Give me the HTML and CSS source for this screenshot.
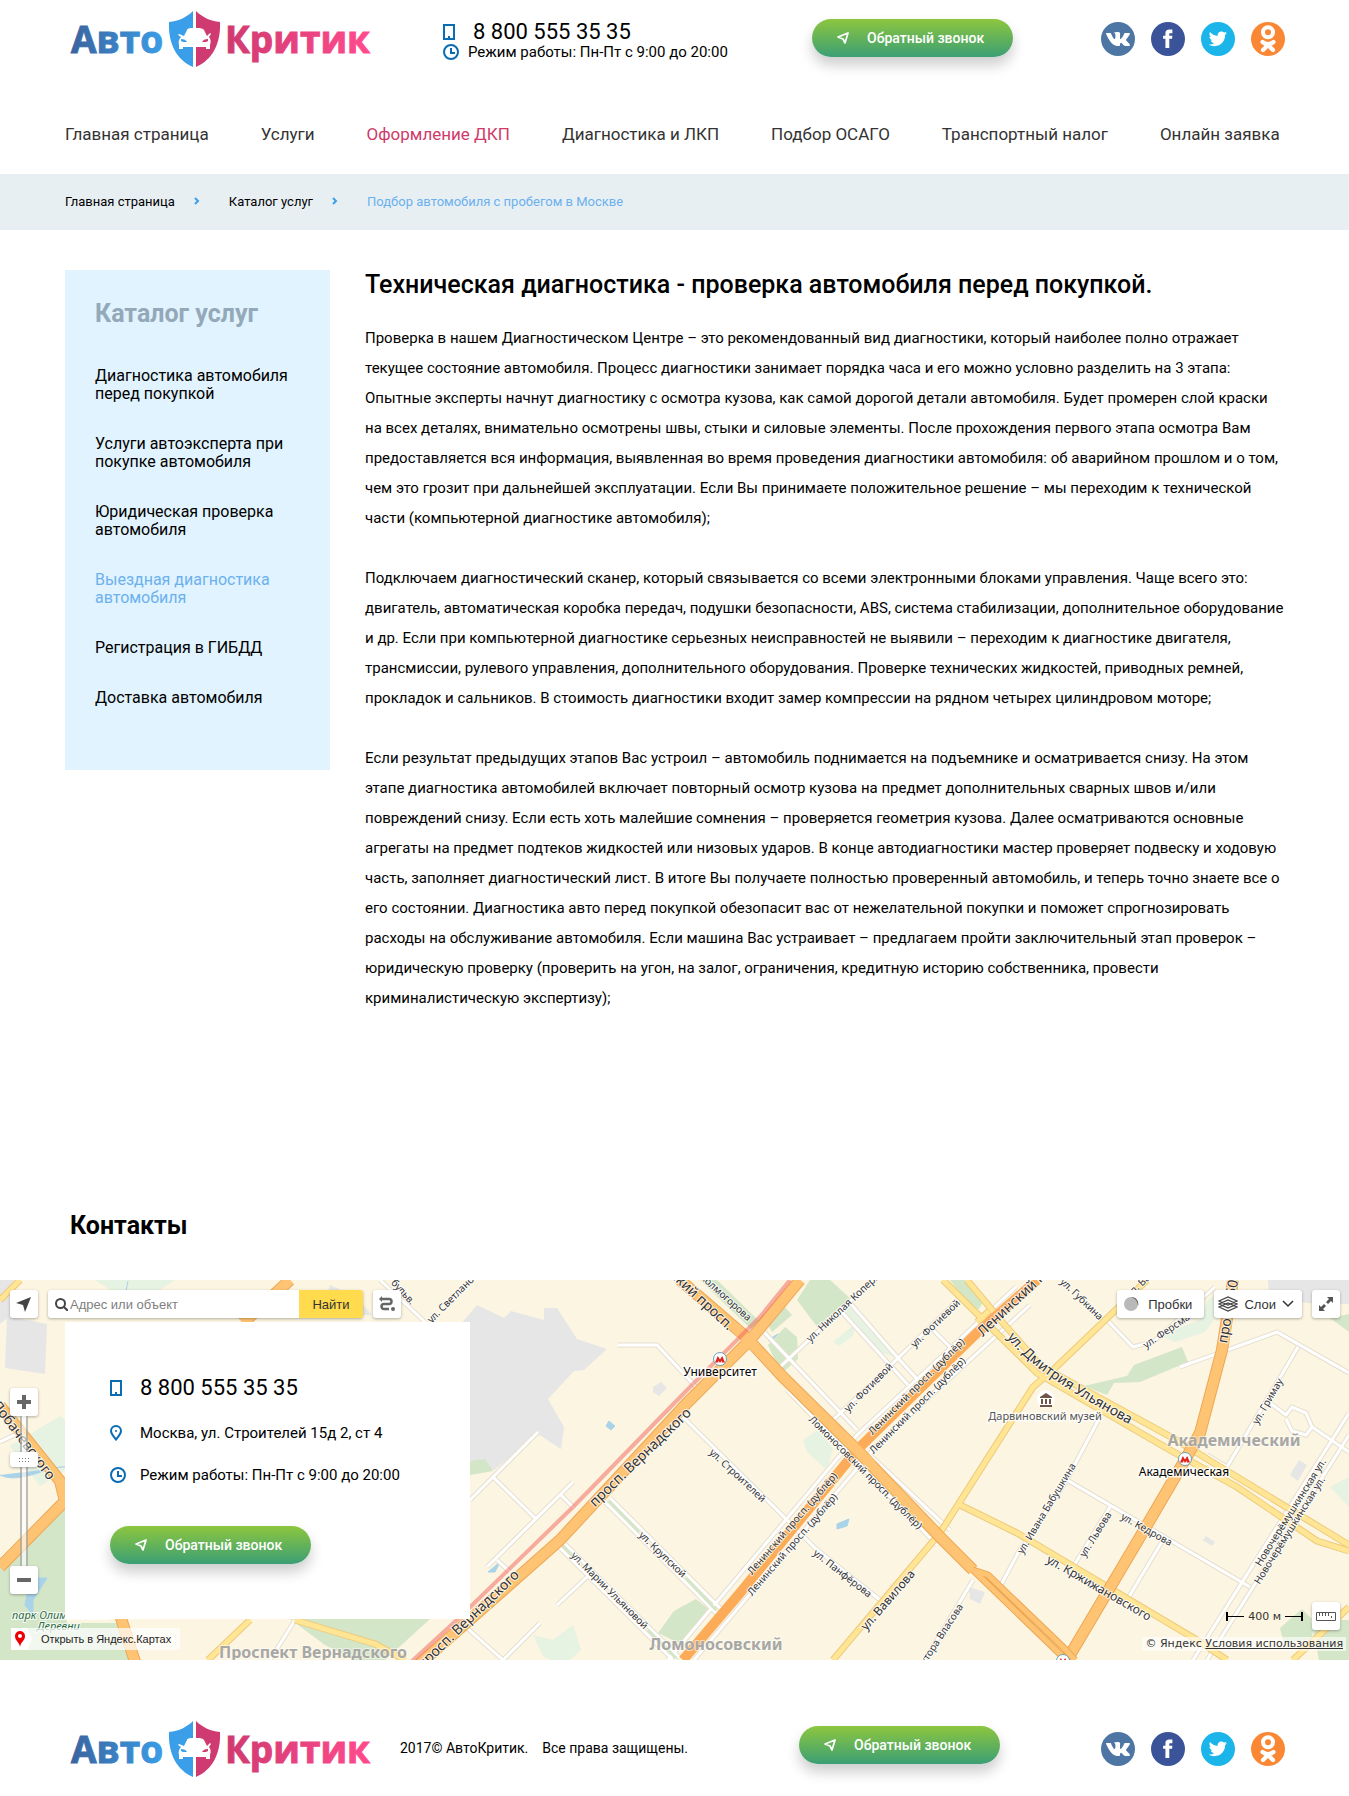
FILE: index.html
```html
<!DOCTYPE html>
<html lang="ru">
<head>
<meta charset="utf-8">
<meta name="viewport" content="width=device-width, initial-scale=1">
<title>АвтоКритик — техническая диагностика</title>
<link rel="stylesheet" href="styles.css">
</head>
<body>
<svg class="sprite" aria-hidden="true">
  <defs>
    <linearGradient id="blue" x1="0" y1="0" x2="1" y2="0"><stop offset="0" stop-color="#3b64a0"/><stop offset="1" stop-color="#3a9de6"/></linearGradient>
    <linearGradient id="pink" x1="0" y1="0" x2="1" y2="0"><stop offset="0" stop-color="#cf3a70"/><stop offset="1" stop-color="#ff4b8d"/></linearGradient>
  </defs>
  <symbol id="logo" viewBox="0 0 310 58">
    <text class="logo-text" x="6" y="43" fill="url(#blue)" stroke="url(#blue)">Авто</text>
    <text class="logo-text" x="160" y="43" fill="url(#pink)" stroke="url(#pink)">Критик</text>
    <path fill="#3a9fe8" d="M128 1v56C112 50 103 34 104 12 114 11 122 7 128 1z"/>
    <path fill="#cf3a70" d="M131 1v56C147 50 156 34 155 12 145 11 137 7 131 1z"/>
    <path fill="#fff" d="M119 26l3-6c1-2 3-2 8-2s7 0 9 2l3 6 3-3 1 1-2 3c2 2 2 5 1 8v4h-4v-2h-23v2h-4v-4c-1-3 0-6 2-8l-3-2 1-1z"/>
    <path fill="#3a9fe8" d="M116 29c3 0 5 1 6 3-3 0-5 0-6-1z"/>
    <path fill="#cf3a70" d="M143 29c-3 0-5 1-6 3 3 0 5 0 6-1z"/>
  </symbol>
  <symbol id="phone" viewBox="0 0 12 16"><path fill="none" stroke="#0a6db3" stroke-width="2" d="M1 1h10v14H1z"/><path fill="#0a6db3" d="M5 12h2v3H5z"/></symbol>
  <symbol id="clock" viewBox="0 0 16 16"><circle cx="8" cy="8" r="7" fill="none" stroke="#0a6db3" stroke-width="2"/><path fill="none" stroke="#0a6db3" stroke-width="2" d="M8 4v5h4"/></symbol>
  <symbol id="pin" viewBox="0 0 12 16"><path fill="none" stroke="#0a6db3" stroke-width="2" d="M6 14.500C3 11 1 8.500 1 6a5 5 0 0 1 10 0c0 2.500-2 5-5 8.500z"/><circle cx="6" cy="6" r="1" fill="#0a6db3"/></symbol>
  <symbol id="send" viewBox="0 0 12 12"><path fill="none" stroke="#fff" stroke-width="1.700" stroke-linejoin="round" d="M1 5l10-4-3 10-2-4z"/></symbol>
  <symbol id="vk" viewBox="0 0 34 34"><circle cx="17" cy="17" r="17" fill="#4d76a4"/><path fill="#fff" transform="translate(5 5)" d="M13.162 18.994c.609 0 .858-.406.851-.915-.031-1.917.714-2.949 2.059-1.604 1.488 1.488 1.796 2.519 3.603 2.519h3.200c.808 0 1.126-.26 1.126-.668 0-.863-1.421-2.386-2.625-3.504-1.686-1.565-1.765-1.602-.313-3.486 1.801-2.339 4.157-5.336 2.073-5.336h-3.981c-.772 0-.828.435-1.103 1.083-.995 2.347-2.886 5.387-3.604 4.922-.751-.485-.407-2.406-.35-5.261.015-.754.011-1.271-1.141-1.539-.629-.145-1.241-.205-1.809-.205-2.273 0-3.841.953-2.950 1.119 1.571.293 1.420 3.692 1.054 5.160-.638 2.556-3.036-2.024-4.035-4.305-.241-.548-.315-.974-1.175-.974h-3.255c-.492 0-.787.16-.787.516 0 .602 2.960 6.720 5.786 9.770 2.756 2.975 5.480 2.708 7.376 2.708z"/></symbol>
  <symbol id="fb" viewBox="0 0 34 34"><circle cx="17" cy="17" r="17" fill="#3b5499"/><path fill="#fff" transform="translate(7.500 7.500) scale(.77)" d="M9 8H6v4h3v12h5V12h3.600l.4-4H14V6.300c0-1 .2-1.300 1.100-1.300H18V0h-3.800C10.600 0 9 1.600 9 4.600V8z"/></symbol>
  <symbol id="tw" viewBox="0 0 34 34"><circle cx="17" cy="17" r="17" fill="#1bb5ea"/><path fill="#fff" transform="translate(7.700 7.700) scale(.76)" d="M24 4.557c-.883.392-1.832.656-2.828.775 1.017-.609 1.798-1.574 2.165-2.724-.951.564-2.005.974-3.127 1.195-.897-.957-2.178-1.555-3.594-1.555-3.179 0-5.515 2.966-4.797 6.045-4.091-.205-7.719-2.165-10.148-5.144-1.290 2.213-.669 5.108 1.523 6.574-.806-.026-1.566-.247-2.229-.616-.054 2.281 1.581 4.415 3.949 4.890-.693.188-1.452.232-2.224.084.626 1.956 2.444 3.379 4.600 3.419-2.070 1.623-4.678 2.348-7.290 2.040 2.179 1.397 4.768 2.212 7.548 2.212 9.142 0 14.307-7.721 13.995-14.646.962-.695 1.797-1.562 2.457-2.549z"/></symbol>
  <symbol id="ok" viewBox="0 0 34 34"><circle cx="17" cy="17" r="17" fill="#fa8734"/><circle cx="17" cy="10.300" r="5" fill="none" stroke="#fff" stroke-width="4"/><path fill="none" stroke="#fff" stroke-width="4.200" stroke-linecap="round" stroke-linejoin="round" d="M11.500 20c3.500 2.600 7.500 2.600 11 0M17 23l-5 5M17 23l5 5"/></symbol>
  <symbol id="metro" viewBox="0 0 14 14"><circle cx="7" cy="7" r="6.500" fill="#fff" stroke="#6aa2b8"/><path fill="#e2231a" d="M2 10.500l2.800-6.500L7 7.600 9.200 4 12 10.500H8.800L8.600 8.600 7 11 5.400 8.600l-.2 1.900z"/></symbol>
</svg>

<header class="container">
  <div class="top-row">
    <a class="logo" href="#" aria-label="АвтоКритик"><svg><use href="#logo"/></svg></a>
    <div class="contact">
      <a class="contact-phone" href="tel:88005553535"><svg class="i-phone"><use href="#phone"/></svg>8 800 555 35 35</a>
      <div class="contact-hours"><svg class="i-clock"><use href="#clock"/></svg>Режим работы: Пн-Пт с 9:00 до 20:00</div>
    </div>
    <button class="call" type="button"><svg><use href="#send"/></svg>Обратный звонок</button>
    <div class="social">
      <a href="#" aria-label="ВКонтакте"><svg><use href="#vk"/></svg></a>
      <a href="#" aria-label="Facebook"><svg><use href="#fb"/></svg></a>
      <a href="#" aria-label="Twitter"><svg><use href="#tw"/></svg></a>
      <a href="#" aria-label="Одноклассники"><svg><use href="#ok"/></svg></a>
    </div>
  </div>
  <nav class="menu">
    <a href="#">Главная страница</a>
    <a href="#">Услуги</a>
    <a href="#" class="accent">Оформление ДКП</a>
    <a href="#">Диагностика и ЛКП</a>
    <a href="#">Подбор ОСАГО</a>
    <a href="#">Транспортный налог</a>
    <a href="#">Онлайн заявка</a>
  </nav>
</header>

<nav class="crumbs" aria-label="Навигационная цепочка">
  <div class="container crumbs-row">
    <a href="#">Главная страница</a>
    <svg class="chevron" viewBox="0 0 6 8"><path d="M1 1l3 3-3 3"/></svg>
    <a href="#">Каталог услуг</a>
    <svg class="chevron" viewBox="0 0 6 8"><path d="M1 1l3 3-3 3"/></svg>
    <span class="current">Подбор автомобиля с пробегом в Москве</span>
  </div>
</nav>

<main>
  <div class="container page">
    <aside class="catalog">
      <h2>Каталог услуг</h2>
      <ul>
        <li><a href="#">Диагностика автомобиля перед покупкой</a></li>
        <li><a href="#">Услуги автоэксперта при покупке автомобиля</a></li>
        <li><a href="#">Юридическая проверка автомобиля</a></li>
        <li><a href="#" class="active">Выездная диагностика автомобиля</a></li>
        <li><a href="#">Регистрация в ГИБДД</a></li>
        <li><a href="#">Доставка автомобиля</a></li>
      </ul>
    </aside>
    <article>
      <h1>Техническая диагностика - проверка автомобиля перед покупкой.</h1>
      <p>Проверка в нашем Диагностическом Центре – это рекомендованный вид диагностики, который наиболее полно отражает текущее состояние автомобиля. Процесс диагностики занимает порядка часа и его можно условно разделить на 3 этапа:<br>Опытные эксперты начнут диагностику с осмотра кузова, как самой дорогой детали автомобиля. Будет промерен слой краски на всех деталях, внимательно осмотрены швы, стыки и силовые элементы. После прохождения первого этапа осмотра Вам предоставляется вся информация, выявленная во время проведения диагностики автомобиля: об аварийном прошлом и о том, чем это грозит при дальнейшей эксплуатации. Если Вы принимаете положительное решение – мы переходим к технической части (компьютерной диагностике автомобиля);</p>
      <p>Подключаем диагностический сканер, который связывается со всеми электронными блоками управления. Чаще всего это: двигатель, автоматическая коробка передач, подушки безопасности, ABS, система стабилизации, дополнительное оборудование и др. Если при компьютерной диагностике серьезных неисправностей не выявили – переходим к диагностике двигателя, трансмиссии, рулевого управления, дополнительного оборудования. Проверке технических жидкостей, приводных ремней, прокладок и сальников. В стоимость диагностики входит замер компрессии на рядном четырех цилиндровом моторе;</p>
      <p>Если результат предыдущих этапов Вас устроил – автомобиль поднимается на подъемнике и осматривается снизу. На этом этапе диагностика автомобилей включает повторный осмотр кузова на предмет дополнительных сварных швов и/или повреждений снизу. Если есть хоть малейшие сомнения – проверяется геометрия кузова. Далее осматриваются основные агрегаты на предмет подтеков жидкостей или низовых ударов. В конце автодиагностики мастер проверяет подвеску и ходовую часть, заполняет диагностический лист. В итоге Вы получаете полностью проверенный автомобиль, и теперь точно знаете все о его состоянии. Диагностика авто перед покупкой обезопасит вас от нежелательной покупки и поможет спрогнозировать расходы на обслуживание автомобиля. Если машина Вас устраивает – предлагаем пройти заключительный этап проверок – юридическую проверку (проверить на угон, на залог, ограничения, кредитную историю собственника, провести криминалистическую экспертизу);</p>
    </article>
  </div>

  <h2 class="contacts-title container">Контакты</h2>
  <section class="map">
    <svg class="map-canvas" viewBox="0 0 1349 380" preserveAspectRatio="xMidYMid slice" aria-label="Карта">
      <rect width="1349" height="380" fill="#fbf5e1"/>
      <!-- built-up areas -->
      <path class="grey" d="M0 0h14l-4 36-10 8zM7 36l40 8-2 50-40-6zM460 45l17-20 27 13 7-7 33 9v-12h13l20 31 30 10-23 21-10 1-26 28 16 28-3 22-23-15-44 36-30-12zM653 107l8-5 6 6-8 8-6-4zM1268 0h81v24l-42-1-38-8zM1290 195l9-15 8 5-9 16zM1203 260l3-4 9 6-3 4zM969 307l16 5-5 12-10-5zM330 5l26 12 16 18h-52z"/>
      <!-- parks and water -->
      <path class="green" d="M67 223v120h53l10 37H0v-95zM290 339h140l-45 41h-30l-30-15zM470 181l15-2 8 12-23 4zM700 0h17l44 43-8 8zM797 20l13-20h20l22 20-34 28zM768 65l17-18 12 10 1 22-17 15zM768 45l13-22 11 12-20 17zM950 0h15l18 22-4 7-8-1zM658 353l16-22 22-12 15 12-30 33zM1084 106l43-10 7-11 48-18 6 15-48 20-26 1-7 12zM1349 34l-19 4 19 14zM1280 348l22-19 12 12-2 18-28 5zM1349 340h-38l8 40h30z"/>
      <path class="mint" d="M848 25l46 52-14-5-34-38zM833 62l22-18-2 12-14 10zM803 160l15-10 15 18-6 22-20-18zM1160 55l40-15 8-20 14-10-3 22-14 20-30 10zM533 355l20 5 20-15 8 25-18 16-20-10zM1330 207l19-10v30zM95 0h80l-40 26zM100 168l-60 38-30-40 50-30z"/>
      <path class="water" d="M128 1l-2 10M0 195c20 10 50-10 66-8M30 298l17 0-14 22 0 15-8-10zM606 146l3-5 6 5-4 4zM837 244l12-5-2 7-10 3zM768 60l10-6-8 8zM488 292l12-10-5 10z"/>
      <!-- side streets -->
      <g class="street-edge">
        <path id="st" d="M0 162L25 150M618 65h39l40 43M683 137l84 83 20 20 28 28 65 52M605 222l113 113M610 218l113 113M555 263l118 117M562 261l118 117M587 297l-30 28M538 152l-68 68M493 197l42 41M573 202l-86 85M560 214l14 14M497 280l13 12M467 348l36 32 37-37M780 87L873 0M833 140l60-57 67-65M850 23l47 54 21 23M840 30l50 55 18 20M930 47l20 20M1107 40l26 27 20-5 62-55M1180 87l97-35 72 41M1298 67l-71 120-20-12M1270 123l16 12 6-8 14 6 6 14-6 8-14-4-6-12M1312 147l37 25M1349 133l-156 247M1349 155l-142 225M1100 137l-35 66-47 70-18 34M1067 200l183 107M1110 227l-37 60M1163 260l-36 60M973 300l-48 80M380 0l45 42M1016 7L857 155 668 380M1030 25L877 165 694 380M762 50l95 100M787 110l150 155M870 175l80 75M295 340l-25 40"/>
      </g>
      <use href="#st" class="street"/>
      <path class="verge" d="M609 221l30 31M686 298l30 32M561 264l14 14M648 350l28 28"/>
      <!-- yellow roads -->
      <g class="yellow-edge"><path id="yl" d="M943 0l94 93 133 77 67 37 80 54 32 10M967 0l36 43 38 43 130 71 178 108M977 42l12-11M1147 0l-94 90-20 17-93 146L833 380M960 225l57 28 180 107 30 20M1293 380l56-53M250 340l-42 40M295 340l80 24 30 16M0 20L20 0"/></g>
      <use href="#yl" class="yellow"/>
      <!-- avenues -->
      <g class="orange-edge"><path id="or" d="M415 388L560 260 687 123l63-63 50-60M680 0l65 56 38 41 74 73 83 87 33 33M0 287l65-66-5-20L0 126M290 0l-47 43M120 335l16 50M1233 0l-11 70-22 83-15 27-45 77-73 123"/></g>
      <use href="#or" class="orange"/>
      <path class="split-edge" d="M973 290l90 87M973 290l15 5 75 72 12 13"/>
      <path class="split" d="M973 290l90 87M973 290l15 5 75 72 12 13"/>
      <path class="deep" d="M1037 0l-60 53-120 117-117 143-57 67"/>
      <path class="orange-cross" d="M842 155l30 30M736 48l20 20"/>
      <path class="metro-line" d="M410 383l50-46 113-110L690 107l70-70L790 0"/>
      <use href="#metro" x="713" y="72" width="14" height="14"/>
      <use href="#metro" x="1178" y="172" width="14" height="14"/>
      <use href="#metro" x="1056" y="374" width="14" height="14"/>
      <circle cx="1046" cy="119" r="9" fill="#fff"/>
      <path fill="#6f5548" d="M1040 117l6-4 6 4v1h-12zM1041 119h2v5h-2zM1045 119h2v5h-2zM1049 119h2v5h-2zM1040 125h12v2h-12z"/>
      <!-- labels -->
      <g class="label l14 mid">
        <text transform="translate(640 177) rotate(-44)" dy="5">просп. Вернадского</text>
        <text transform="translate(468 339) rotate(-44)" dy="5">просп. Вернадского</text>
        <text transform="translate(24 160) rotate(53)" dy="5">Лобачевского</text>
      </g>
      <g class="label l14">
        <text class="end" transform="translate(731 48) rotate(43)" dy="4">Ломоносовский просп.</text>
        <text transform="translate(980 54) rotate(-43)" dy="4">Ленинский просп.</text>
        <path id="ulyanova" fill="none" stroke="none" d="M1007 57C1028 86 1070 112 1136 148"/>
        <text><textPath href="#ulyanova">ул. Дмитрия Ульянова</textPath></text>
        <text transform="translate(1222 63) rotate(-80)" dy="5">просп. 60-летия</text>
      </g>
      <g class="label l12 mid">
        <text transform="translate(888 320) rotate(-49)" dy="4">ул. Вавилова</text>
        <text transform="translate(1099 308) rotate(30)" dy="4">ул. Кржижановского</text>
      </g>
      <g class="label l10 mid">
        <text transform="translate(935 43) rotate(-44)" dy="4">ул. Фотиевой</text>
        <text transform="translate(868 107) rotate(-45)" dy="4">ул. Фотиевой</text>
        <text transform="translate(916 106) rotate(-45)" dy="4">Ленинский просп. (дублёр)</text>
        <text transform="translate(917 125) rotate(-45)" dy="4">Ленинский просп. (дублёр)</text>
        <text transform="translate(792 243) rotate(-49)" dy="4">Ленинский просп. (дублёр)</text>
        <text transform="translate(792 264) rotate(-49)" dy="4">Ленинский просп. (дублёр)</text>
        <text transform="translate(866 192) rotate(45)" dy="4">Ломоносовский просп. (дублёр)</text>
        <text transform="translate(1267 121) rotate(-60)" dy="4">ул. Гримау</text>
        <text transform="translate(1290 232) rotate(-58)" dy="4">Новочерёмушкинская ул.</text>
        <text transform="translate(1289 250) rotate(-58)" dy="4">Новочерёмушкинская ул.</text>
        <text transform="translate(1147 249) rotate(29)" dy="4">ул. Кедрова</text>
        <text transform="translate(1095 254) rotate(-58)" dy="4">ул. Львова</text>
        <text transform="translate(1046 228) rotate(-59)" dy="4">ул. Ивана Бабушкина</text>
        <text transform="translate(843 293) rotate(38)" dy="4">ул. Панфёрова</text>
        <text transform="translate(738 195) rotate(43)" dy="4">ул. Строителей</text>
        <text transform="translate(663 274) rotate(44)" dy="4">ул. Крупской</text>
        <text transform="translate(610 310) rotate(45)" dy="4">ул. Марии Ульяновой</text>
      </g>
      <g class="label l10">
        <text transform="translate(430 42) rotate(-45)" dy="2">ул. Светланова</text>
        <text transform="translate(392 2) rotate(47)" dy="2">бульв.</text>
        <text class="end" transform="translate(749 40) rotate(42)" dy="2">ул. Колмогорова</text>
        <text transform="translate(809 61) rotate(-43)" dy="2">ул. Николая Коперника</text>
        <text transform="translate(1061 1) rotate(44)" dy="2">ул. Губкина</text>
        <text transform="translate(1129 16) rotate(-43)" dy="2">ул. Вавилова</text>
        <text transform="translate(1145 67) rotate(-34)" dy="2">ул. Ферсмана</text>
        <text class="end" transform="translate(961 325) rotate(-57)" dy="3">ул. Архитектора Власова</text>
      </g>
      <g class="district mid">
        <text x="313" y="378">Проспект Вернадского</text>
        <text x="716" y="370">Ломоносовский</text>
        <text x="1234" y="166">Академический</text>
      </g>
      <g class="label station mid">
        <text x="720" y="96">Университет</text>
        <text x="1184" y="196">Академическая</text>
        <text class="museum" x="1045" y="140">Дарвиновский музей</text>
      </g>
      <g class="label park"><text x="12" y="339">парк Олимпийской</text><text x="37" y="350">Деревни</text></g>
    </svg>

    <div class="container card-row">
      <div class="card">
        <a class="card-phone" href="tel:88005553535"><svg class="i-phone"><use href="#phone"/></svg>8 800 555 35 35</a>
        <div class="card-line"><svg class="i-pin"><use href="#pin"/></svg>Москва, ул. Строителей 15д 2, ст 4</div>
        <div class="card-line"><svg class="i-clock"><use href="#clock"/></svg>Режим работы: Пн-Пт с 9:00 до 20:00</div>
        <button class="call" type="button"><svg><use href="#send"/></svg>Обратный звонок</button>
      </div>
    </div>

    <div class="tools tools-left">
      <button class="tool square" type="button" aria-label="Моё местоположение"><svg width="16" height="16" viewBox="0 0 16 16"><path fill="#444" d="M0 7L15 1 9 16 7 9z"/></svg></button>
      <form class="search">
        <svg width="13" height="13" viewBox="0 0 13 13"><circle cx="5.500" cy="5.500" r="4.500" fill="none" stroke="#444" stroke-width="2"/><path stroke="#444" stroke-width="2" d="M9 9l4 4"/></svg>
        <input type="text" aria-label="Адрес или объект" placeholder="Адрес или объект">
        <button type="button">Найти</button>
      </form>
      <button class="tool square" type="button" aria-label="Маршрут"><svg width="16" height="16" viewBox="0 0 16 16"><path fill="none" stroke="#666" stroke-width="2.500" d="M2 3h8a2 2 0 0 1 0 5H5a2 2 0 0 0 0 5h5"/><circle cx="14" cy="13" r="2" fill="#666"/><path fill="#666" d="M3 0v6L0 3z"/></svg></button>
    </div>
    <div class="tools tools-right">
      <button class="tool" type="button"><svg width="16" height="16" viewBox="0 0 16 16"><circle cx="8" cy="8" r="7" fill="#b9b9b9"/><path fill="#444" d="M8 1a7 7 0 0 1 7 9c0-5-3-8-7-9z"/></svg><span>Пробки</span></button>
      <button class="tool layers" type="button"><svg width="20" height="16" viewBox="0 0 20 16"><path fill="#fff" stroke="#444" stroke-width="1.300" d="M1 11l9 4 9-4-9-4zM1 8l9 4 9-4-9-4zM1 5l9 4 9-4-9-4z"/></svg><span>Слои</span><svg width="12" height="8" viewBox="0 0 12 8"><path fill="none" stroke="#333" stroke-width="1.500" d="M1 1l5 5 5-5"/></svg></button>
      <button class="tool square" type="button" aria-label="На весь экран"><svg width="14" height="14" viewBox="0 0 14 14"><path fill="#555" d="M14 0v6l-2-2-3 3-2-2 3-3-2-2zM0 14V8l2 2 3-3 2 2-3 3 2 2z"/></svg></button>
    </div>
    <div class="zoom">
      <button class="tool square" type="button" aria-label="Приблизить"><svg width="14" height="14" viewBox="0 0 14 14"><path stroke="#666" stroke-width="4" d="M7 0v14M0 7h14"/></svg></button>
      <div class="track"><svg class="knob" viewBox="0 0 28 15"><path stroke="#777" stroke-dasharray="1 2" d="M9 6.500h10M9 9.500h10"/></svg></div>
      <button class="tool square" type="button" aria-label="Отдалить"><svg width="14" height="14" viewBox="0 0 14 14"><path stroke="#666" stroke-width="4" d="M0 7h14"/></svg></button>
    </div>
    <a class="open-map" href="#"><svg width="21" height="22" viewBox="0 0 21 22"><path fill="#fff" d="M0 0h16l5 11-5 11H0z"/><path fill="#e00" fill-rule="evenodd" d="M9 3a5 5 0 0 1 5 5c0 5-4 5-5 11-.5-5-5-6-5-11a5 5 0 0 1 5-5zm0 3a2 2 0 1 0 0 4 2 2 0 0 0 0-4z"/></svg>Открыть в Яндекс.Картах</a>
    <div class="map-info">
      <div class="scale-row"><div class="scale"><i></i><span>400 м</span><i></i></div>
      <button class="tool square" type="button" aria-label="Линейка"><svg width="20" height="9" viewBox="0 0 20 9"><path fill="none" stroke="#555" d="M.5.5h19v8H.5zM3.500 1v3M6.500 1v3M9.500 1v3M12.500 1v3M15.500 4v2"/></svg></button></div>
      <div class="copyright">© Яндекс <a href="#">Условия использования</a></div>
    </div>
  </section>
</main>

<footer class="container footer-row">
  <a class="logo" href="#" aria-label="АвтоКритик"><svg><use href="#logo"/></svg></a>
  <div class="rights"><span>2017© АвтоКритик.</span><span>Все права защищены.</span></div>
  <button class="call" type="button"><svg><use href="#send"/></svg>Обратный звонок</button>
  <div class="social">
    <a href="#" aria-label="ВКонтакте"><svg><use href="#vk"/></svg></a>
    <a href="#" aria-label="Facebook"><svg><use href="#fb"/></svg></a>
    <a href="#" aria-label="Twitter"><svg><use href="#tw"/></svg></a>
    <a href="#" aria-label="Одноклассники"><svg><use href="#ok"/></svg></a>
  </div>
</footer>
</body>
</html>
```
FILE: styles.css
```css
* { box-sizing: border-box; }
body { margin: 0; background: #fff; color: #000; font-family: Roboto, "Liberation Sans", sans-serif; font-size: 15px; }
a { color: inherit; text-decoration: none; }
h1, h2, p, ul { margin: 0; padding: 0; }
ul { list-style: none; }
button { font: inherit; border: 0; cursor: pointer; }
svg { display: block; flex: none; }
.sprite { position: absolute; width: 0; height: 0; }
.container { padding-left: 65px; padding-right: 64px; }

/* header */
.top-row { display: grid; grid-template-columns: 378fr 369fr 289fr 184px; align-items: center; height: 76px; }
.logo { padding-top: 2px; }
.logo svg { width: 310px; height: 58px; }
.logo-text { font-family: "Open Sans", "Noto Sans", sans-serif; font-weight: 700; font-size: 37px; stroke-width: 1px; }
.contact { padding-top: 6px; }
.contact-phone { display: flex; align-items: center; gap: 18px; font-size: 22px; line-height: 22px; }
.contact-hours { display: flex; align-items: center; gap: 9px; font-size: 15px; line-height: 18px; }
.i-phone, .i-pin { width: 12px; height: 16px; }
.i-clock { width: 16px; height: 16px; }
.call { display: flex; align-items: center; gap: 18px; width: 201px; height: 38px; padding: 0 25px; border-radius: 19px; background: linear-gradient(#8dc63f, #3b9f74); box-shadow: 0 8px 14px rgba(0, 0, 0, .2); color: #fff; font-size: 14px; font-weight: 500; white-space: nowrap; }
.call svg { width: 12px; height: 12px; }
.social { display: flex; gap: 16px; padding-top: 2px; }
.social svg { width: 34px; height: 34px; }
.menu { display: flex; gap: 52px; align-items: center; height: 80px; margin-top: 18px; color: #333; font-size: 17px; white-space: nowrap; }
.accent { color: #cf3a6b; }

/* breadcrumbs */
.crumbs { background: #e8eff3; font-size: 13px; }
.crumbs-row { display: flex; align-items: center; height: 56px; padding-bottom: 2px; }
.chevron { width: 6px; height: 8px; margin: 0 29px 0 19px; }
.chevron path { fill: none; stroke: #3a9fe8; stroke-width: 2; }
.current { color: #6bb1ee; }

/* page body */
.page { display: grid; grid-template-columns: 265px minmax(0, 1fr); gap: 35px; align-items: start; padding-top: 40px; }
.catalog { padding: 29px 30px 63px; background: #e1f3fe; }
.catalog h2 { margin-bottom: 38px; color: #93a8b8; font-size: 25px; line-height: 30px; }
.catalog ul { display: flex; flex-direction: column; gap: 32px; font-size: 16px; line-height: 18px; }
.active { color: #6bb1ee; }
h1 { margin-bottom: 23px; font-size: 25px; line-height: 30px; font-weight: 500; }
article p { font-size: 15px; line-height: 30px; }
article p + p { margin-top: 30px; }
.contacts-title { margin: 198px 5px 39px; font-size: 25px; line-height: 30px; }

/* map */
.map { position: relative; min-height: 380px; overflow: hidden; }
.map-canvas { position: absolute; inset: 0; width: 100%; height: 100%; }
.grey { fill: #e6e6e6; }
.green { fill: #d4e6c8; }
.mint { fill: #e6f2e2; }
.water { fill: #a9d3e8; stroke: #a9d3e8; }
#yl, #or, #st { fill: none; }
.street-edge { stroke: #e6dfd0; stroke-width: 5; }
.street { stroke: #fff; stroke-width: 3; }
.verge { fill: none; stroke: #d4e6c8; stroke-width: 3; }
.yellow-edge { stroke: #edca7c; stroke-width: 7; }
.yellow { stroke: #ffe594; stroke-width: 5; }
.orange-edge { stroke: #eda754; stroke-width: 12; }
.orange { stroke: #fec473; stroke-width: 10; }
.orange-cross { stroke: #fec473; stroke-width: 10; }
.split-edge { fill: none; stroke: #eda754; stroke-width: 7; }
.split { fill: none; stroke: #fec473; stroke-width: 5; }
.deep { fill: none; stroke: #fcac58; stroke-width: 10; }
.metro-line { fill: none; stroke: #f3625a; stroke-opacity: .5; stroke-width: 4; }
.label { font-family: "Noto Sans", "Open Sans", sans-serif; fill: #333; stroke: #fff; stroke-width: 2px; stroke-opacity: .8; paint-order: stroke; }
.l14 { font-size: 14px; }
.l12 { font-size: 12px; }
.l10 { font-size: 10px; }
.mid { text-anchor: middle; }
.end { text-anchor: end; }
.district { font: bold 16px "Noto Sans", sans-serif; fill: #a8a7a3; stroke: #fff; stroke-opacity: .5; stroke-width: 2px; paint-order: stroke; }
.station { font-size: 12px; fill: #000; stroke-width: 3px; }
.museum { font-size: 11px; fill: #555; }
.park { font-size: 11px; font-style: italic; fill: #2c6b45; }

.card-row { position: relative; padding-top: 42px; padding-bottom: 41px; }
.card { width: 405px; max-width: 100%; padding: 53px 45px 55px; background: #fff; }
.card-phone { display: flex; align-items: center; gap: 18px; font-size: 22px; line-height: 26px; }
.card-line { display: flex; align-items: center; gap: 18px; margin-top: 22px; font-size: 15px; line-height: 20px; }
.card-line .i-clock { margin-right: -4px; }
.card .call { margin-top: 41px; }

.tools { position: absolute; top: 10px; display: flex; gap: 10px; font: 13px "Liberation Sans", Arial, sans-serif; }
.tools-left { left: 10px; }
.tools-right { right: 9px; }
.tool { display: flex; align-items: center; gap: 9px; height: 28px; padding: 0 12px 0 6px; border-radius: 3px; background: #fff; color: #333; box-shadow: 0 1px 3px rgba(0, 0, 0, .3); }
.square { width: 28px; padding: 0; justify-content: center; }
.layers { gap: 6px; padding: 0 8px 0 4px; }
.search { display: flex; align-items: center; width: 315px; height: 28px; padding-left: 7px; border-radius: 3px; background: #fff; box-shadow: 0 1px 3px rgba(0, 0, 0, .3); overflow: hidden; }
.search input { flex: 1; min-width: 0; padding: 0 2px; border: 0; outline: 0; background: none; font: 13px "Liberation Sans", Arial, sans-serif; color: #333; }
.search input::placeholder { color: #808080; }
.search button { width: 64px; height: 28px; padding: 0; background: #ffdb4d; color: #333; }
.zoom { position: absolute; top: 108px; left: 10px; }
.track { width: 8px; height: 150px; margin: 0 auto; padding-top: 36px; border: solid rgba(0, 0, 0, .25); border-width: 0 2px; background: rgba(255, 255, 255, .6); }
.knob { width: 28px; height: 15px; margin-left: -12px; border-radius: 3px; background: #fff; box-shadow: 0 1px 3px rgba(0, 0, 0, .3); }
.open-map { position: absolute; left: 11px; top: 348px; display: flex; align-items: center; gap: 9px; width: 169px; height: 22px; border-radius: 3px; background: rgba(255, 255, 255, .7); font: 11px "Liberation Sans", Arial, sans-serif; color: #222; white-space: nowrap; }
.map-info { position: absolute; right: 3px; bottom: 9px; color: #333; font: 11px "DejaVu Sans", Verdana, sans-serif; }
.scale-row { display: flex; justify-content: flex-end; align-items: center; gap: 9px; padding-right: 6px; }
.scale { display: flex; align-items: center; }
.scale i { width: 18px; height: 9px; border-left: 2px solid #000; background: linear-gradient(#000, #000) center / 100% 1px no-repeat; }
.scale i:last-child { border-left: 0; border-right: 2px solid #000; }
.scale span { padding: 0 4px; }
.copyright { margin-top: 7px; padding: 0 3px; line-height: 14px; background: rgba(255, 255, 255, .6); white-space: nowrap; }
.copyright a { text-decoration: underline; }

/* footer */
.footer-row { display: grid; grid-template-columns: 335fr 399fr 302fr 184px; align-items: center; padding-top: 58px; padding-bottom: 18px; }
.rights { display: flex; gap: 14px; font-size: 14px; white-space: nowrap; }
.footer-row .call { margin-bottom: 6px; }
```
